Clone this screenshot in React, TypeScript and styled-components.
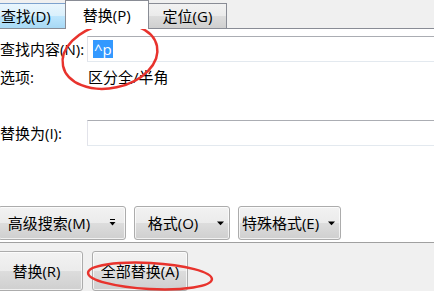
import styled, { createGlobalStyle } from "styled-components"

const GlobalStyle = createGlobalStyle`
  html, body {
    margin: 0;
    padding: 0;
    background: #f0f0f0;
    overflow: hidden;
  }
  body {
    font-family: "Open Sans", "Noto Sans CJK SC", sans-serif;
    font-size: 15px;
    color: #000;
  }
`

const Dialog = styled.div`
  position: relative;
  width: 434px;
  height: 291px;
  overflow: hidden;
  display: flex;
  flex-direction: column;
`

const TabStrip = styled.div`
  height: 29px;
  display: flex;
  align-items: flex-end;
  border-bottom: 1px solid #898c95;
  margin-left: -14px;
`

const Tab = styled.div<{ $active?: boolean; $hover?: boolean }>`
  box-sizing: border-box;
  height: ${(p) => (p.$active ? "29px" : "25px")};
  margin-bottom: ${(p) => (p.$active ? "-1px" : "0")};
  padding: 0 ${(p) => (p.$active ? "17px" : "14px")};
  display: flex;
  align-items: center;
  line-height: 20px;
  border: 1px solid ${(p) => (p.$hover ? "#7da2ce" : "#898c95")};
  border-bottom: ${(p) => (p.$active ? "none" : "0")};
  margin-right: -1px;
  background: ${(p) =>
    p.$active
      ? "#fff"
      : p.$hover
        ? "linear-gradient(#eaf6fd, #d9f0fc 50%, #bee6fd 50%, #a7d9f5)"
        : "linear-gradient(#f2f2f2, #ebebeb 50%, #dddddd 50%, #cfcfcf)"};
  position: relative;
  z-index: ${(p) => (p.$active ? 2 : 1)};
`

const Page = styled.div`
  box-sizing: border-box;
  height: 222px;
  background: #fff;
  border-bottom: 1px solid #a0a0a0;
  display: flex;
  flex-direction: column;
  padding-top: 7px;
`

const Row = styled.div<{ $top?: number }>`
  display: flex;
  align-items: center;
  margin-top: ${(p) => p.$top ?? 0}px;
`

const Label = styled.div`
  width: 87px;
  flex: none;
  line-height: 20px;
  white-space: nowrap;
`

const TextBox = styled.div`
  box-sizing: border-box;
  flex: 1;
  height: 26px;
  margin-right: -10px;
  border: 1px solid #e2e3ea;
  border-top-color: #abadb3;
  border-bottom-color: #e3e9ef;
  display: flex;
  align-items: center;
  padding-left: 5px;
`

const Selected = styled.span`
  background: #3399ff;
  color: #fff;
  line-height: 18px;
  padding: 0 1px;
`

const Value = styled.div`
  line-height: 20px;
  padding-left: 1px;
`

const ActionRow = styled.div`
  display: flex;
  gap: 8px;
  margin-top: 60px;
  margin-left: -2px;
`

const Button = styled.div<{ $width: number }>`
  box-sizing: border-box;
  width: ${(p) => p.$width}px;
  height: 34px;
  border: 1px solid #acacac;
  border-radius: 3px;
  box-shadow: inset 0 0 0 1px rgba(255, 255, 255, 0.7);
  background: linear-gradient(#f2f2f2, #ebebeb 50%, #dddddd 50%, #cfcfcf);
  display: flex;
  align-items: center;
  line-height: 20px;
  white-space: nowrap;
`

const ButtonText = styled.span`
  flex: 1;
  text-align: center;
`

const Arrow = styled.span<{ $space: number }>`
  width: ${(p) => p.$space}px;
  display: flex;
  justify-content: center;
`

const Footer = styled.div`
  flex: 1;
  display: flex;
  gap: 9px;
  padding-top: 8px;
  margin-left: -10px;
`

const FooterButton = styled(Button)`
  height: 40px;
  justify-content: center;
`

const Marks = styled.svg`
  position: absolute;
  left: 0;
  top: 0;
  pointer-events: none;
`

const Caret = ({ double }: { double?: boolean }) => (
  <svg width="7" height="8" viewBox="0 0 7 8">
    {double && <rect x="1" y="0" width="5" height="1" fill="#000" />}
    <path d={double ? "M0.5 3h6l-3 3.5z" : "M0 2.5h7l-3.5 3.8z"} fill="#000" />
  </svg>
)

export default function App() {
  return (
    <>
      <GlobalStyle />
      <Dialog>
        <TabStrip>
          <Tab $hover>查找(D)</Tab>
          <Tab $active>替换(P)</Tab>
          <Tab>定位(G)</Tab>
        </TabStrip>
        <Page>
          <Row>
            <Label>查找内容(N):</Label>
            <TextBox>
              <Selected>^p</Selected>
            </TextBox>
          </Row>
          <Row $top={5}>
            <Label>选项:</Label>
            <Value>区分全/半角</Value>
          </Row>
          <Row $top={33}>
            <Label>替换为(I):</Label>
            <TextBox />
          </Row>
          <ActionRow>
            <Button $width={128}>
              <ButtonText>高级搜索(M)</ButtonText>
              <Arrow $space={26}>
                <Caret double />
              </Arrow>
            </Button>
            <Button $width={96}>
              <ButtonText>格式(O)</ButtonText>
              <Arrow $space={18}>
                <Caret />
              </Arrow>
            </Button>
            <Button $width={103}>
              <ButtonText>特殊格式(E)</ButtonText>
              <Arrow $space={18}>
                <Caret />
              </Arrow>
            </Button>
          </ActionRow>
        </Page>
        <Footer>
          <FooterButton $width={93}>替换(R)</FooterButton>
          <FooterButton $width={96}>全部替换(A)</FooterButton>
        </Footer>
        <Marks width="434" height="291" viewBox="0 0 434 291">
          <ellipse
            cx="110"
            cy="56"
            rx="48"
            ry="32"
            transform="rotate(-12 110 56)"
            fill="none"
            stroke="#e8332d"
            strokeWidth="2.5"
          />
          <ellipse
            cx="150"
            cy="276"
            rx="62"
            ry="13"
            transform="rotate(3 150 276)"
            fill="none"
            stroke="#e8332d"
            strokeWidth="2.5"
          />
        </Marks>
      </Dialog>
    </>
  )
}
